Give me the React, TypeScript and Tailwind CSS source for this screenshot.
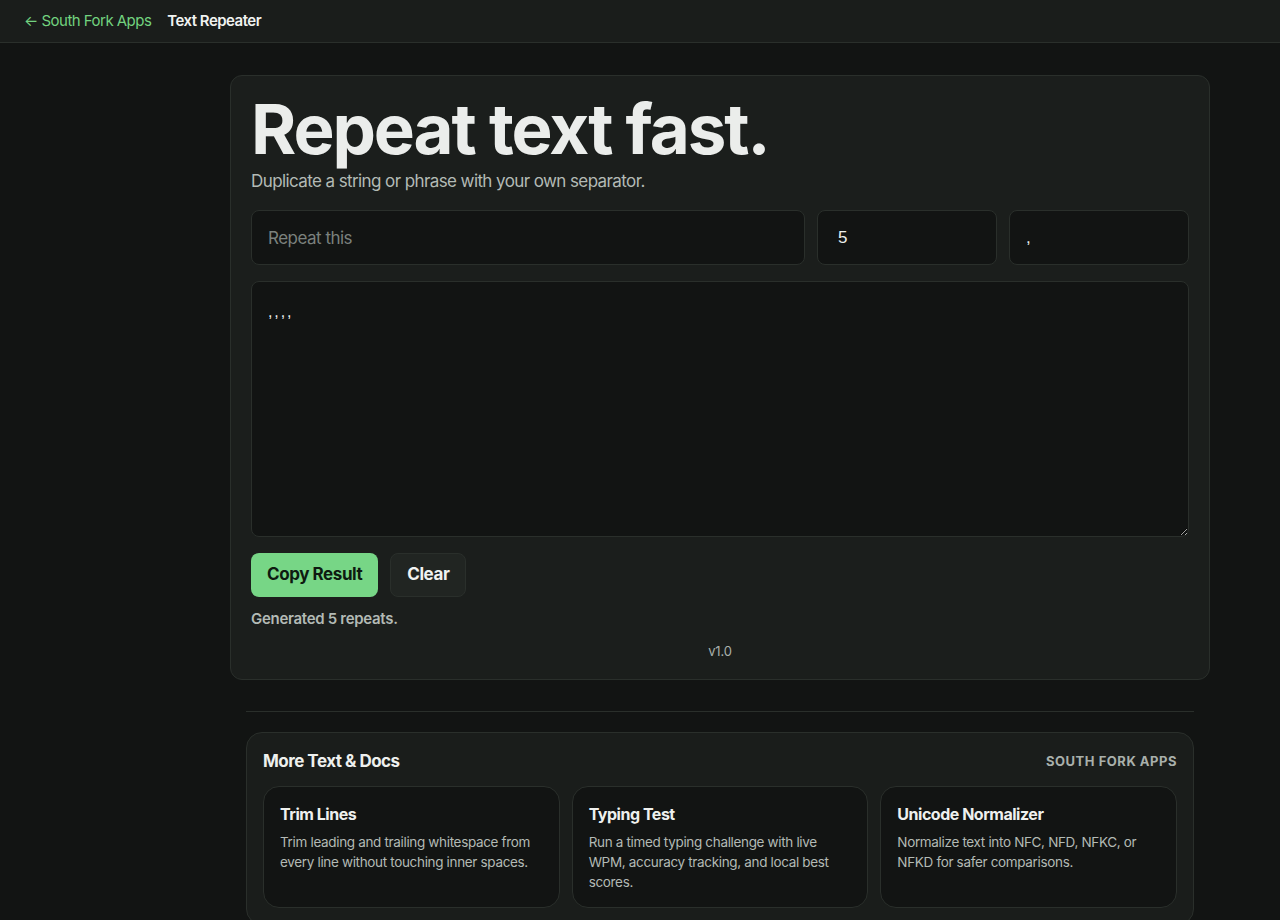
import React, { useMemo, useState } from 'react';

type Tool = {
  title: string;
  desc: string;
};

const tools: Tool[] = [
  { title: 'Trim Lines', desc: 'Trim leading and trailing whitespace from every line without touching inner spaces.' },
  { title: 'Typing Test', desc: 'Run a timed typing challenge with live WPM, accuracy tracking, and local best scores.' },
  { title: 'Unicode Normalizer', desc: 'Normalize text into NFC, NFD, NFKC, or NFKD for safer comparisons.' },
];

const App: React.FC = () => {
  const [text, setText] = useState('');
  const [count, setCount] = useState('5');
  const [sep, setSep] = useState(',');

  const n = Math.max(0, parseInt(count, 10) || 0);
  const result = useMemo(() => Array.from({ length: n }, () => text).join(sep), [text, n, sep]);

  return (
    <div className="min-h-screen bg-[#121413] text-[#ecefed] font-['Inter',sans-serif]">
      <header className="h-[43px] flex items-center gap-4 px-6 bg-[#1a1d1b] border-b border-[#2a2f2b]">
        <a href="#" className="text-[15px] tracking-[-0.035em] text-[#72d37f]">
          ← South Fork Apps
        </a>
        <span className="text-[15px] font-semibold tracking-[-0.035em] text-[#f1f3f1]">Text Repeater</span>
      </header>

      <main className="pl-[160px] pt-8 pb-10">
        <section className="mx-auto max-w-[980px] rounded-xl border border-[#2a2f2b] bg-[#1b1e1c] px-5 pt-5 pb-[18px]">
          <h1 className="text-[69px] leading-[66px] font-bold tracking-[-0.03em] text-[#ebedeb]">Repeat text fast.</h1>
          <p className="mt-[7px] text-[17px] leading-6 tracking-[-0.035em] text-[#b3bab5]">
            Duplicate a string or phrase with your own separator.
          </p>

          <div className="mt-[17px] grid grid-cols-[1fr_180px_180px] gap-3">
            <input
              value={text}
              onChange={(e) => setText(e.target.value)}
              placeholder="Repeat this"
              className="h-[55px] rounded-lg border border-[#2a2f2b] bg-[#121413] px-4 text-[17px] tracking-[-0.03em] text-[#ecefed] placeholder:text-[#7b817d] outline-none"
            />
            <input
              value={count}
              onChange={(e) => setCount(e.target.value)}
              className="h-[55px] rounded-lg border border-[#2a2f2b] bg-[#121413] px-5 text-[17px] font-['Liberation_Sans',sans-serif] text-[#ecefed] outline-none"
            />
            <input
              value={sep}
              onChange={(e) => setSep(e.target.value)}
              className="h-[55px] rounded-lg border border-[#2a2f2b] bg-[#121413] px-4 text-[17px] font-['Liberation_Sans',sans-serif] text-[#ecefed] outline-none"
            />
          </div>

          <textarea
            readOnly
            value={result}
            className="mt-4 block w-full h-[256px] rounded-lg border border-[#2a2f2b] bg-[#121413] px-4 py-[18px] text-[16px] tracking-[0.12em] font-['Liberation_Sans',sans-serif] text-[#ecefed] outline-none resize-y"
          />

          <div className="mt-4 flex gap-3">
            <button className="h-[44px] px-4 rounded-lg bg-[#77d686] text-[#0e1a10] text-[17px] font-bold tracking-[-0.025em]">
              Copy Result
            </button>
            <button
              onClick={() => setText('')}
              className="h-[44px] px-4 rounded-lg border border-[#2a2f2b] bg-[#212522] text-[#f1f3f1] text-[17px] font-bold tracking-[-0.025em]"
            >
              Clear
            </button>
          </div>

          <p className="mt-[11px] text-[15px] font-semibold tracking-[-0.02em] text-[#b3bab5]">Generated {n} repeats.</p>

          <p className="mt-[11px] text-center text-[13px] tracking-[-0.01em] text-[#a9b0ab]">v1.0</p>
        </section>

        <hr className="mx-auto mt-[31px] max-w-[948px] border-t border-[#2a2f2b]" />

        <section className="mx-auto mt-[20px] max-w-[948px] rounded-2xl border border-[#2a2f2b] bg-[#1a1d1b] px-4 pt-4 pb-4">
          <div className="flex items-center justify-between">
            <h2 className="text-[17px] font-bold tracking-[-0.03em] text-[#eef0ee]">More Text &amp; Docs</h2>
            <span className="text-[13px] font-bold uppercase tracking-[0.04em] text-[#a9b0ab]">South Fork Apps</span>
          </div>
          <div className="mt-[11px] grid grid-cols-3 gap-3">
            {tools.map((t) => (
              <a
                key={t.title}
                href="#"
                className="block h-[122px] rounded-2xl border border-[#2a2f2b] bg-[#121413] px-4 pt-[15px]"
              >
                <div className="text-[16px] font-bold tracking-[-0.03em] text-[#eef0ee]">{t.title}</div>
                <div className="mt-[6px] text-[13.5px] leading-5 tracking-[-0.025em] text-[#b3bab5]">{t.desc}</div>
              </a>
            ))}
          </div>
        </section>
      </main>
    </div>
  );
};

export default App;
